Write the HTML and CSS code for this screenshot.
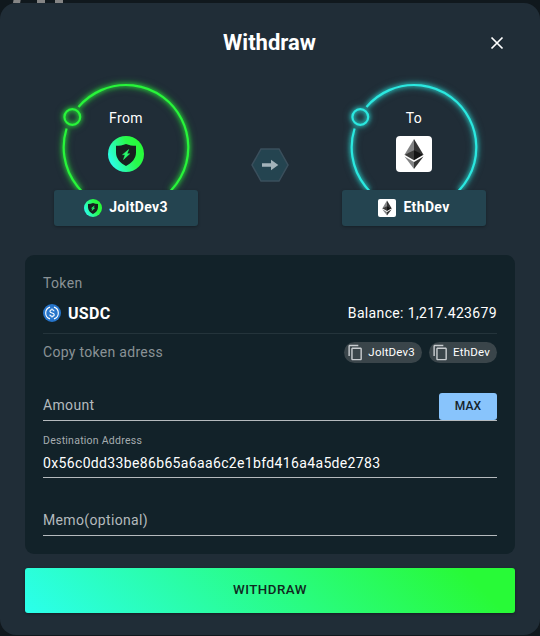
FILE: index.html
```html
<!DOCTYPE html>
<html lang="en">
<head>
<meta charset="utf-8">
<title>Withdraw</title>
<link rel="stylesheet" href="styles.css">
</head>
<body>
<svg class="defs" aria-hidden="true">
  <defs>
    <linearGradient id="jolt-fill" x1="0.05" y1="0.7" x2="0.95" y2="0.3">
      <stop offset="0" stop-color="#2bfce8"/><stop offset=".65" stop-color="#28fa4c"/><stop offset="1" stop-color="#28fa37"/>
    </linearGradient>
    <symbol id="jolt" viewBox="0 0 36 36">
      <circle cx="18" cy="18" r="18" fill="url(#jolt-fill)"/>
      <path d="M18 8c3 1.300 6.700 1.800 10 1.800v6.700c0 6-4.200 10.500-10 13.500-5.800-3-10-7.500-10-13.500V9.800C11.300 9.800 15 9.300 18 8z" fill="#17201f"/>
      <path d="M20.700 13.500l-6.200 5.200h2.600l-1.600 4.800 6.200-5.700h-2.700z" fill="#28fa6c" stroke="#28fa6c" stroke-width=".5"/>
    </symbol>
    <symbol id="eth" viewBox="0 0 36 36">
      <rect width="36" height="36" rx="4" fill="#fff"/>
      <path d="M18 3v12.500l-9.500 3.300z" fill="#828384"/>
      <path d="M18 3v12.500l9.500 3.300z" fill="#343434"/>
      <path d="M18 14.300l-9.500 4.400 9.500 5.500z" fill="#3c3c3b"/>
      <path d="M18 14.300l9.500 4.400-9.500 5.500z" fill="#141414"/>
      <path d="M8.500 20.500L18 26v7z" fill="#828384"/>
      <path d="M27.500 20.500L18 26v7z" fill="#343434"/>
    </symbol>
    <symbol id="copy" viewBox="0 0 24 24">
      <path fill="currentColor" d="M16 1H4c-1.100 0-2 .9-2 2v14h2V3h12V1zm3 4H8c-1.100 0-2 .9-2 2v14c0 1.100.9 2 2 2h11c1.100 0 2-.9 2-2V7c0-1.100-.9-2-2-2zm0 16H8V7h11v14z"/>
    </symbol>
    <symbol id="ring" viewBox="0 0 144 115">
      <path d="M24.500 32A62.300 62.300 0 1 1 12.600 53.500" fill="none" stroke="currentColor" stroke-width="2.200"/>
      <circle cx="18.300" cy="42" r="7.900" fill="none" stroke="currentColor" stroke-width="2.200"/>
    </symbol>
  </defs>
</svg>
<main class="dialog">
  <header class="head">
    <h1>Withdraw</h1>
    <button class="close" aria-label="Close"><svg viewBox="0 0 14 14"><path d="M1.500 1.500l11 11M12.500 1.500l-11 11"/></svg></button>
  </header>

  <section class="route">
    <div class="chain from">
      <div class="orbit">
        <svg class="ring"><use href="#ring"/></svg>
        <span class="dir">From</span>
        <svg class="logo"><use href="#jolt"/></svg>
      </div>
      <div class="name"><svg><use href="#jolt"/></svg><span>JoltDev3</span></div>
    </div>
    <svg class="hex" viewBox="0 0 38 34">
      <path d="M10 1h18l9 16-9 16H10L1 17z" fill="#244450" stroke="#3a4f5c" stroke-width="1.500"/>
      <path d="M11 15.200h9v-3.400l7.300 5.200-7.300 5.200v-3.400h-9z" fill="#a3b3ba"/>
    </svg>
    <div class="chain to">
      <div class="orbit">
        <svg class="ring"><use href="#ring"/></svg>
        <span class="dir">To</span>
        <svg class="logo"><use href="#eth"/></svg>
      </div>
      <div class="name"><svg><use href="#eth"/></svg><span>EthDev</span></div>
    </div>
  </section>

  <section class="panel">
    <div class="caption">Token</div>
    <div class="token-row">
      <svg class="usdc" viewBox="0 0 32 32">
        <circle cx="16" cy="16" r="16" fill="#2775ca"/>
        <g fill="none" stroke="#fff" stroke-width="2">
          <path d="M12.500 5.500a11 11 0 0 0 0 21M19.500 5.500a11 11 0 0 1 0 21"/>
          <path d="M19.700 13c-.2-1.900-1.700-2.700-3.700-2.700-2.200 0-3.700 1-3.700 2.700 0 4.200 7.600 1.900 7.600 6 0 1.800-1.600 2.800-3.900 2.800-2.400 0-3.900-1-4-2.900M16 8v2.300M16 21.800V24"/>
        </g>
      </svg>
      <strong>USDC</strong>
      <span class="balance">Balance: 1,217.423679</span>
    </div>
    <div class="copy-row">
      <span class="caption">Copy token adress</span>
      <button class="chip"><svg><use href="#copy"/></svg><span>JoltDev3</span></button>
      <button class="chip"><svg><use href="#copy"/></svg><span>EthDev</span></button>
    </div>
    <div class="field amount"><span class="placeholder">Amount</span><button class="max">MAX</button></div>
    <div class="field address">
      <span class="label">Destination Address</span>
      <span class="value">0x56c0dd33be86b65a6aa6c2e1bfd416a4a5de2783</span>
    </div>
    <div class="field memo"><span class="placeholder">Memo(optional)</span></div>
  </section>

  <button class="submit">WITHDRAW</button>
</main>
</body>
</html>
```
FILE: styles.css
```css
* { box-sizing: border-box; }
body {
  margin: 0;
  padding-top: 3px;
  height: 636px;
  overflow: hidden;
  font: 14px/20px Roboto, "Liberation Sans", sans-serif;
  letter-spacing: .35px;
  color: #fff;
  background:
    linear-gradient(100deg, transparent 1px, #858585 2px 8px, transparent 9px) 12px 0 / 10px 3px no-repeat,
    linear-gradient(#858585, #858585) 37px 0 / 8px 3px no-repeat,
    linear-gradient(#858585, #858585) 55px 0 / 8px 3px no-repeat,
    #10181d;
}
button { font: inherit; letter-spacing: inherit; color: inherit; border: 0; padding: 0; }
.defs { position: absolute; width: 0; height: 0; }
.dialog {
  height: 632px;
  padding: 0 25px;
  border-radius: 16px;
  background: #202d37;
}
.head {
  height: 72px;
  padding-top: 8px;
  display: grid;
  grid-template-columns: 36px 1fr 36px;
  align-items: center;
}
.head h1 {
  grid-column: 2;
  margin: 0;
  text-align: center;
  font-size: 22px;
  line-height: 28px;
  font-weight: 700;
  letter-spacing: 0;
  padding-right: 1px;
}
.close { width: 36px; height: 36px; background: none; display: grid; place-items: center; }
.close svg { width: 14px; height: 14px; stroke: #fff; stroke-width: 1.7; fill: none; }

.route { height: 151px; padding: 0 29px; display: flex; justify-content: space-between; }
.chain { width: 144px; }
.from { color: #28f53a; }
.to { color: #2be8e0; }
.orbit {
  height: 115px;
  display: grid;
  justify-items: center;
  align-content: start;
  grid-template-rows: 33px 20px 8px 36px;
  overflow: hidden;
}
.ring {
  grid-area: 1 / 1 / 5 / 2;
  align-self: start;
  width: 144px;
  height: 115px;
  filter: drop-shadow(0 0 2px currentColor) drop-shadow(0 0 3px color-mix(in srgb, currentColor 50%, transparent));
}
.dir { grid-area: 2 / 1; color: #fff; }
.logo { grid-area: 4 / 1; width: 36px; height: 36px; }
.name {
  height: 36px;
  display: flex;
  align-items: center;
  justify-content: center;
  gap: 7px;
  border-radius: 3px;
  color: #fff;
  font-weight: 700;
  background: #244450;
  box-shadow: 0 1px 3px rgba(0, 0, 0, .3);
}
.name svg { width: 18px; height: 18px; }
.name span { margin-bottom: 2px; }
.hex { width: 38px; height: 34px; margin-top: 73px; }

.panel {
  margin-top: 29px;
  height: 299px;
  padding: 18px;
  border-radius: 9px;
  background: #122229;
}
.caption { color: #8a9296; }
.token-row {
  height: 41px;
  display: flex;
  align-items: center;
  border-bottom: 1px solid #24343b;
}
.token-row .usdc { width: 18px; height: 18px; margin-right: 7px; }
.token-row strong { font-size: 16px; letter-spacing: .3px; padding-top: 2px; }
.balance { margin-left: auto; }
.copy-row { height: 37px; padding-bottom: 1px; display: flex; align-items: center; gap: 7px; }
.copy-row .caption { margin-right: auto; letter-spacing: .3px; }
.chip {
  height: 21px;
  padding: 0 7px 0 4px;
  display: flex;
  align-items: center;
  gap: 3px;
  border-radius: 11px;
  font-size: 11.5px;
  letter-spacing: .2px;
  background: #3a454a;
}
.chip svg { width: 17px; height: 17px; margin-left: -1px; color: #c8cccf; }
.chip span { margin-left: 1px; }
.field { border-bottom: 1px solid #b5babd; }
.placeholder { color: #b4babd; }
.amount { height: 50px; display: flex; align-items: flex-end; justify-content: space-between; }
.amount .placeholder { padding-bottom: 5px; }
.max {
  width: 58px;
  height: 27px;
  padding-bottom: 1px;
  border-radius: 3px;
  font-size: 12px;
  font-weight: 500;
  letter-spacing: .2px;
  color: #14222b;
  background: #88c4fc;
}
.address { height: 57px; display: flex; flex-direction: column; }
.label { margin-top: 12px; font-size: 10.500px; line-height: 16px; letter-spacing: .25px; color: #a5acaf; }
.value { margin-top: 4px; }
.memo { height: 58px; padding-top: 32px; }

.submit {
  display: block;
  width: 100%;
  height: 45px;
  padding-bottom: 2px;
  margin-top: 14px;
  border-radius: 3px;
  font-size: 13.3px;
  font-weight: 500;
  letter-spacing: .5px;
  color: #10281f;
  background: linear-gradient(45deg, #2bffec 0%, #28fa37 90%);
  box-shadow: 0 1px 3px rgba(0, 0, 0, .35);
}
```
